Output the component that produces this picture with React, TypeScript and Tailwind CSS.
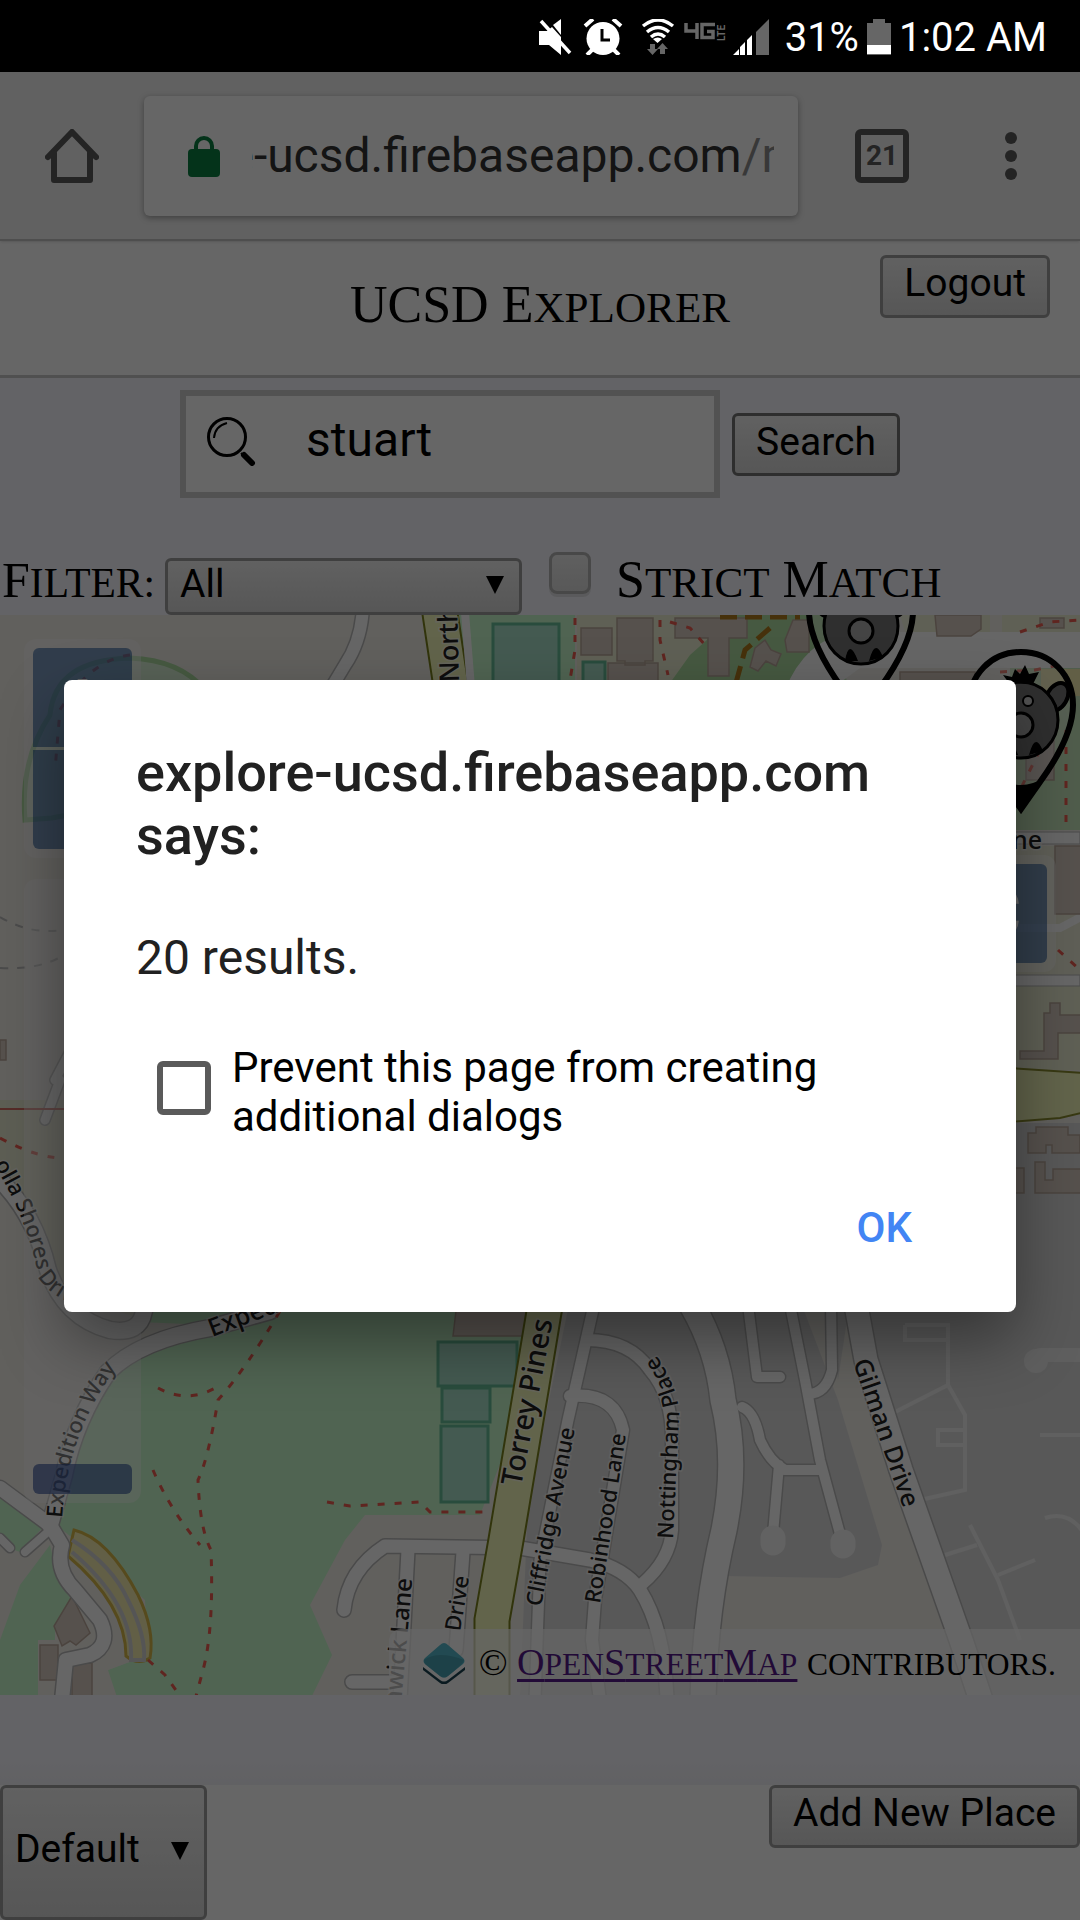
import React from "react";

const serif = "font-['Liberation_Serif',serif]";
const face = "border-[3px] rounded-md bg-linear-to-b from-[#f2f2f2] to-[#d8d8d8] text-[39px] leading-[47px] text-black";

/* Large small-caps: lowercase runs are drawn as slightly reduced capitals. */
function SmallCaps({ children }: { children: string }) {
  return (
    <>
      {children.split(/([a-z.:]+)/).map((run, i) =>
        i % 2 ? <span key={i} className="text-[0.83em] uppercase">{run}</span> : run
      )}
    </>
  );
}

function StatusIcons() {
  return (
    <svg className="h-9 w-[232px] shrink-0" viewBox="538 18 232 36" aria-hidden="true">
      <g fill="#fff">
        <path d="M538 30h8l5-4 9 10v18l-12-10h-10z" />
        <path d="M552 24l8-6v16z" />
        <path d="M540 20l29 32" stroke="#fff" strokeWidth="3.5" />
        <circle cx="602" cy="37.500" r="16.500" />
        <path d="M584 25l8-7M612 18l8 7M591 49l-5 5M613 49l5 5" stroke="#fff" strokeWidth="4" />
      </g>
      <path d="M601 28v11h8" fill="none" stroke="#000" strokeWidth="3" />
      <g fill="none" stroke="#fff" strokeWidth="3.500">
        <path d="M642 25q15-12 30 0" />
        <path d="M646 31q11-9 22 0" />
        <path d="M650 36q7-6 14 0" />
      </g>
      <path d="M652 38q5-3 9 0l-4.500 4z" fill="#fff" />
      <path d="M649 43h5v5h3l-5.500 6-5.500-6h3zM659 53h5v-5h3l-5.500-6-5.500 6h3z" fill="#666" />
      <path d="M685 22v8h11M696 22v16M714 23.500h-13v13h11v-6h-6" fill="none" stroke="#666" strokeWidth="3.500" />
      <text transform="translate(724 40) rotate(-90)" fontSize="10" fontWeight="700" fill="#666" fontFamily="Roboto, sans-serif">LTE</text>
      <path d="M732 54l6-6v6zM739 54v-8l5-5v13zM746 54V39l5-5v20z" fill="#fff" />
      <path d="M755 54V31l13-13v36z" fill="#666" />
    </svg>
  );
}

function Pin({ x, y }: { x: number; y: number }) {
  return (
    <g transform={`translate(${x} ${y})`}>
      <path d="M0-49C-30-49-52-26-52 4c0 22 12 48 33 77L0 108l19-27C40 52 52 26 52 4 52-26 30-49 0-49z" fill="#fff" fillOpacity=".25" stroke="#000" strokeWidth="6" />
      <path d="M-24 76Q0 92 24 76L0 112z" fill="#000" />
      <ellipse cx="-36" cy="-4" rx="10" ry="15" transform="rotate(-30 -36 -4)" fill="#777" stroke="#000" strokeWidth="4" />
      <ellipse cx="36" cy="-4" rx="10" ry="15" transform="rotate(30 36 -4)" fill="#777" stroke="#000" strokeWidth="4" />
      <ellipse cy="19" rx="37" ry="38" fill="#777" stroke="#000" strokeWidth="3" />
      <path d="M-12-18l-6-8 9 2 3-8 5 5 5-9 4 9 10-2-6 12z" fill="#000" />
      <circle cy="24" r="12" fill="#aaa" stroke="#000" strokeWidth="3" />
      <circle cx="7" cy="0" r="5" fill="#ccc" stroke="#000" strokeWidth="2" />
      <path d="M-16 54q4-24 13 0zM8 54q6-24 14-4z" fill="#000" />
    </g>
  );
}

const whiteRoads = [
  { d: "M363 605Q362 640 345 665L330 690", w: 12 },
  { d: "M0 1180Q35 1215 48 1270Q65 1318 110 1330Q140 1335 144 1311", w: 16 },
  { d: "M270 1311L210 1328Q140 1340 108 1372Q75 1420 64 1475L50 1525", w: 16 },
  { d: "M0 1488L50 1525L62 1545Q55 1570 75 1590L100 1620Q112 1645 90 1655L66 1660L62 1700", w: 14 },
  { d: "M50 1530L25 1552M10 1548L0 1538", w: 8 },
  { d: "M344 1610Q348 1570 385 1546L520 1548L590 1560Q625 1568 640 1590Q665 1630 667 1700", w: 13 },
  { d: "M408 1550L400 1700M463 1552L456 1650M352 1682H400", w: 13 },
  { d: "M594 1305L568 1420L540 1560L535 1700", w: 11 },
  { d: "M587 1340Q630 1340 650 1370Q672 1395 672 1440V1530Q670 1560 642 1584", w: 12 },
  { d: "M570 1396Q615 1392 623 1430L595 1600L592 1640L600 1700", w: 12 },
  { d: "M692 1305Q718 1350 723 1400Q738 1460 724 1530Q705 1610 703 1700", w: 25 },
  { d: "M856 1305L866 1360L901 1470L961 1640L981 1700", w: 23 },
  { d: "M748 1305L757 1377H780M790 1305L805 1380L820 1460L843 1545M831 1305L832 1370Q826 1394 808 1394", w: 10 },
  { d: "M742 1407Q755 1412 760 1440Q770 1462 785 1470H820M779 1465L772 1545", w: 10 },
  { d: "M60 1080L45 1120M150 900L55 1080", w: 9 },
];

const gentleLanes =
  "M905 1325H948V1385L965 1415V1490L920 1500M948 1385L895 1412M905 1325V1340H948M963 1430H938V1445H963M970 1525L998 1580L1020 1640M998 1575L1035 1560M945 1555L977 1545M1040 1435H1080M1045 1518Q1070 1510 1085 1535";

const footpaths = [
  "M280 1311Q245 1370 218 1400Q208 1460 198 1480Q200 1530 211 1550Q214 1630 203 1670L195 1700",
  "M158 1388Q190 1405 220 1385M153 1470Q170 1510 200 1545",
  "M327 1502L350 1506L420 1502L430 1512H492",
  "M148 1660L165 1675L183 1700",
  "M575 618V650L570 680M660 620V640L668 675M670 622L690 628L705 645",
  "M1020 632L1050 622L1080 620M1000 672L1035 670L1060 665M1066 730V830M1040 750L1020 790",
  "M0 1138Q40 1160 70 1158M1058 950L1080 970M130 655Q90 660 60 710L55 770",
];

const buildings = [
  "M581 628h31v27h-31zM617 618h36v43h-8v4h-20v-4h-8zM608 663h50v25h-50zM675 618h72v20h-18v38h-21v-38h-33zM755 648l10-8 6 10 10 4-5 12-10-5-8 10-8-4zM785 640l8-20h16v32h-22z",
  "M935 615h46v14l-10 7h-34zM1040 618h24v10h-24zM900 672h75v20h-75zM1026 740h28v40h-28z",
  "M1055 846h35v68h-35zM1050 1003h10v12h22v18h-24v26h-38v-8h24v-38h6zM1028 1133h8v-6h32v8h12v18h-28v-8h-6v8h-18zM1012 1168h12v25h-12zM1035 1162h10v18h8v-11h30v24h-48z",
  "M456 1311h72l-3 25h-72zM72 1596l18 37-14 12-6-4-8 5-8-20zM40 1645h18v35H40zM72 1663h20v40H72zM0 1040h6v20H0z",
];

const labels = [
  { d: "M521 1487L558 1292", t: "Torrey Pines", s: 29 },
  { d: "M853 1362L916 1545", t: "Gilman Drive", s: 25 },
  { d: "M541 1607L580 1402", t: "Cliffridge Avenue", s: 22 },
  { d: "M600 1604L631 1402", t: "Robinhood Lane", s: 22 },
  { d: "M673 1539L679 1415Q678 1375 632 1325", t: "Nottingham Place", s: 22 },
  { d: "M401 1706L414 1560", t: "nwick Lane", s: 24 },
  { d: "M460 1632L472 1560", t: "Drive", s: 22 },
  { d: "M212 1337L310 1300", t: "Expedi", s: 25 },
  { d: "M62 1518Q68 1420 135 1345", t: "Expedition Way", s: 22 },
  { d: "M-6 1164Q30 1225 38 1276Q54 1310 150 1322", t: "olla Shores Drive", s: 22 },
  { d: "M459 682L456 570", t: "North", s: 27 },
];

function CampusMap() {
  return (
    <svg className="block h-full w-full" viewBox="0 615 1080 1080" preserveAspectRatio="xMidYMid slice" role="img" aria-label="Campus map">
      <rect y="600" width="1080" height="1100" fill="#f2efe9" />
      <path d="M0 1100H150V1320Q60 1300 48 1260L0 1180z" fill="#e9ebd2" />
      <path d="M150 1311H560L480 1515H365L345 1540L310 1605L332 1655L310 1700H118L108 1670L148 1655L145 1600L100 1560L50 1520L60 1470L105 1370L210 1325L140 1322z" fill="#c8facc" />
      <path d="M0 1495L45 1525L20 1552L0 1545zM50 1545L58 1580L75 1605L55 1625L55 1640H38V1695H0V1640L20 1585z" fill="#c8facc" />
      <path d="M108 1670L148 1655L140 1620L100 1665z" fill="#f2efe9" />
      <path d="M455 600H480V615H575V700H462z" fill="#c8facc" />
      <path d="M577 615H745L700 690H577z" fill="#eef0d5" />
      <path d="M690 655L735 615H825L850 690H665z" fill="#aedfa3" />
      <path d="M900 615H990V632H905zM1002 615H1080V632H1002z" fill="#eef0d5" />
      <path d="M785 690Q805 640 850 632H1080V668H860L830 690z" fill="#fff" />
      <path d="M1010 668H1080V830H1010z" fill="#c8e8bd" />
      <rect x="1041" y="669" width="40" height="27" fill="#f5eeb0" />
      <rect x="1010" y="846" width="70" height="130" fill="#eeeeda" />
      <rect x="1010" y="985" width="70" height="85" fill="#eef0d5" />
      <path d="M1010 832H1080V844H1010zM1010 975H1080V986H1010z" fill="#fff" stroke="#bbb" />
      <path d="M1005 928H1060L1085 915" fill="none" stroke="#fff" strokeWidth="8" />
      <path d="M1010 1068L1085 1073V1112L1060 1118L1010 1122z" fill="#f6fabb" stroke="#8c9030" strokeWidth="2" />
      <path d="M1010 1123H1080V1700H520L528 1500L570 1300H1010z" fill="#dddddd" />
      <path d="M800 1300H826L838 1380L850 1300L990 1700H712L725 1576L840 1578L878 1565L882 1545L838 1400z" fill="#f2efe9" />
      <path d="M1080 1355H1040" stroke="#eee" strokeWidth="14" strokeLinecap="round" />
      <circle cx="1036" cy="1361" r="12" fill="#eee" />
      <path d={gentleLanes} fill="none" stroke="#f0f0f0" strokeWidth="4" />
      <path d="M25 820Q20 760 50 715Q55 660 130 658Q180 660 205 690V800Q90 810 52 818z" fill="#c8facc" fillOpacity=".5" stroke="#aedfa3" strokeWidth="5" />
      <g fill="#aae0cb" stroke="#66bf98" strokeWidth="3">
        <rect x="493" y="624" width="66" height="70" />
        <rect x="583" y="662" width="22" height="30" />
        <rect x="438" y="1342" width="79" height="44" />
        <rect x="442" y="1388" width="48" height="34" />
        <rect x="441" y="1426" width="47" height="76" />
      </g>
      <path d="M74 1530Q108 1538 138 1595Q155 1630 150 1658Q138 1666 126 1656Q126 1605 68 1556z" fill="#f5eeb0" stroke="#d8b84a" strokeWidth="3" />
      <path d="M72 1540Q112 1565 128 1600Q146 1635 144 1660H131Q134 1605 72 1552" fill="none" stroke="#d5d5d5" strokeWidth="4" />
      <g fill="#d6cac1" stroke="#bba99c" strokeWidth="1.500">
        {buildings.map((d) => <path key={d} d={d} />)}
      </g>
      <g fill="none" strokeLinecap="round" strokeLinejoin="round">
        {whiteRoads.map((r) => <path key={r.d} d={r.d} stroke="#b9b9b9" strokeWidth={r.w + 3} />)}
        {whiteRoads.map((r) => <path key={r.d} d={r.d} stroke="#fff" strokeWidth={r.w} />)}
        <path d="M773 1538V1543M843 1542V1546" stroke="#f5f5f5" strokeWidth="25" />
      </g>
      <g fill="none">
        <path d="M546 1300L506 1540L492 1620V1700M438 600L453 700" stroke="#7c831e" strokeWidth="37" />
        <path d="M546 1300L506 1540L492 1620V1700M438 600L453 700" stroke="#f6fabb" strokeWidth="33" />
        <path d="M464 600L472 700" stroke="#fff" strokeWidth="8" />
        <path d="M0 1109H66" stroke="#d46b62" strokeWidth="2" />
        <path d="M0 917Q30 935 64 930M0 968Q40 970 64 955" stroke="#bbb" strokeWidth="2" strokeDasharray="8 9" />
        <path d="M770 628L745 650L734 690M720 617H800" stroke="#b07b1c" strokeWidth="5" strokeDasharray="17 8" />
        {footpaths.map((d) => <path key={d} d={d} stroke="#ee5c50" strokeWidth="3" strokeDasharray="7 10" />)}
      </g>
      <g fontFamily="Noto Sans, sans-serif" fontWeight="500" fill="#222" stroke="#fff" strokeOpacity=".6" strokeWidth="3" paintOrder="stroke">
        {labels.map((l, i) => (
          <React.Fragment key={l.t}>
            <path id={`street-${i}`} d={l.d} fill="none" stroke="none" />
            <text fontSize={l.s}><textPath href={`#street-${i}`}>{l.t}</textPath></text>
          </React.Fragment>
        ))}
        <text x="1012" y="849" fontSize="25">ne</text>
      </g>
      <Pin x={861} y={607} />
      <Pin x={1021} y={701} />
    </svg>
  );
}

function Arrow({ className }: { className: string }) {
  return (
    <svg className={`pointer-events-none absolute h-[18px] w-[18px] ${className}`} viewBox="0 0 18 18" aria-hidden="true">
      <path d="M0 0h18L9 18z" />
    </svg>
  );
}

export default function App() {
  return (
    <div className="relative flex min-h-screen flex-col overflow-hidden bg-white font-[Roboto,sans-serif] text-black">
      <div className="relative z-20 flex h-[72px] items-center justify-end bg-black pt-0.5 pr-[33px] text-[40px] leading-[47px] text-white">
        <StatusIcons />
        <span className="ml-3.5">31%</span>
        <svg className="mx-2 h-9 w-6" viewBox="0 0 24 36" aria-hidden="true">
          <path d="M0 4h6V0h12v4h6v32H0z" fill="#666" />
          <path d="M0 26h24v9H0z" fill="#fff" />
        </svg>
        <span>1:02 AM</span>
      </div>

      <div className="flex h-[169px] items-center border-b-2 border-[#c4c4c4] bg-[#f2f2f2] shadow-sm">
        <button aria-label="Home" className="flex w-36 shrink-0 justify-center">
          <svg className="h-[54px] w-[54px]" viewBox="0 0 54 54" fill="none" stroke="#5a5a5a" strokeWidth="6" strokeLinecap="round" strokeLinejoin="round">
            <path d="M3 28L27 3l24 25" />
            <path d="M9 24v27h36V24" />
          </svg>
        </button>
        <div className="flex h-[120px] min-w-0 flex-1 items-center rounded-md bg-white pr-6 pl-11 shadow-[0_2px_6px_rgba(0,0,0,0.35)]">
          <svg className="h-[42px] w-8 shrink-0" viewBox="0 0 32 42" aria-label="Secure">
            <path d="M8 16v-5a8 8 0 0 1 16 0v5" fill="none" stroke="#0b8043" strokeWidth="4" />
            <rect y="14" width="32" height="28" rx="4" fill="#0b8043" />
          </svg>
          <div className="ml-8 flex min-w-0 flex-1 justify-center overflow-hidden text-5xl leading-[60px] whitespace-nowrap text-[#333]">
            <span className="pl-1.5">e-ucsd.firebaseapp.com<span className="text-[#8c8c8c]">/m</span></span>
          </div>
        </div>
        <button className="mx-[57px] flex h-[54px] w-[54px] shrink-0 items-center justify-center rounded-md border-[6px] border-[#5a5a5a] text-[28px] leading-none font-bold text-[#5a5a5a]">21</button>
        <button aria-label="Menu" className="mr-[63px] ml-[39px] flex shrink-0 flex-col gap-1.5">
          <span className="size-3 rounded-full bg-[#5a5a5a]" />
          <span className="size-3 rounded-full bg-[#5a5a5a]" />
          <span className="size-3 rounded-full bg-[#5a5a5a]" />
        </button>
      </div>

      <header className="grid h-[137px] grid-cols-[1fr_auto_1fr] items-start border-b-[3px] border-[#c8c8c8]">
        <h1 className={`col-start-2 mt-[34px] text-[52px] leading-[60px] ${serif}`}><SmallCaps>UCSD Explorer</SmallCaps></h1>
        <button className={`mt-3.5 mr-[30px] h-[63px] justify-self-end border-[#9e9e9e] px-[21px] pb-1.5 ${face}`}>Logout</button>
      </header>

      <main className="bg-[#f8f8ff]">
        <form className="flex items-center justify-center gap-3 pt-3" onSubmit={(e) => e.preventDefault()}>
          <label className="flex h-[108px] w-1/2 items-center border-[6px] border-[#ccc] bg-white pl-[21px]">
            <svg className="mb-1.5 h-[50px] w-[50px] shrink-0" viewBox="0 0 50 50" aria-hidden="true">
              <circle cx="20" cy="21" r="18.500" fill="none" stroke="#000" strokeWidth="3" />
              <path d="M7 22Q8 10 20 7M34 37l3 3" fill="none" stroke="#000" strokeWidth="2" />
              <path d="M37 39l8 8" stroke="#000" strokeWidth="6" strokeLinecap="round" />
            </svg>
            <input aria-label="Search places" defaultValue="stuart" className="ml-[49px] w-full min-w-0 bg-transparent pb-2 text-5xl leading-[56px] outline-none" />
          </label>
          <button className={`h-[63px] border-[#737373] px-[21px] pb-1 ${face}`}>Search</button>
        </form>
        <div className="flex h-[117px] items-end">
          <label htmlFor="filter" className={`w-[165px] pb-1 pl-0.5 text-[50px] leading-[56px] ${serif}`}><SmallCaps>Filter:</SmallCaps></label>
          <div className="relative w-[357px]">
            <select id="filter" className={`block h-[57px] w-full appearance-none border-[#9e9e9e] pb-1.5 pl-3 ${face}`}>
              <option>All</option>
            </select>
            <Arrow className="top-[18px] right-[18px]" />
          </div>
          <label className={`flex items-end gap-[25px] pl-[27px] text-[52px] leading-[56px] ${serif}`}>
            <input type="checkbox" className="mb-[21px] size-[42px] appearance-none rounded-lg border-[3px] border-[#b4b4b4] bg-linear-to-b from-[#eee] to-[#ddd] shadow-[0_3px_0_#e2e2e6]" />
            <span className="pb-1"><SmallCaps>Strict Match</SmallCaps></span>
          </label>
        </div>

        <section className="relative h-[1080px] overflow-hidden">
          <CampusMap />
          <div className="absolute top-6 left-6 flex w-[117px] flex-col gap-[3px] rounded-xl bg-white/40 p-[9px] text-7xl font-bold text-white">
            <button aria-label="Zoom in" className="h-[99px] rounded-t-md bg-[#003c88]/50">+</button>
            <button aria-label="Zoom out" className="h-[99px] rounded-b-md bg-[#003c88]/50">−</button>
          </div>
          <div className="absolute top-[264px] left-6 flex h-[624px] w-[117px] items-end rounded-xl bg-white/40 p-[9px]">
            <button aria-label="Zoom level" className="h-[30px] w-full rounded-md bg-[#234493]/60" />
          </div>
          <div className="absolute top-[240px] right-6 w-[117px] rounded-xl bg-white/40 p-[9px]">
            <button aria-label="Center map" className="h-[99px] w-full rounded-md bg-[#003c88]/50 text-7xl font-bold text-white">C</button>
          </div>
          <div className={`absolute right-0 bottom-0 flex h-[66px] items-center rounded-tl-xl bg-white/70 pt-0.5 pr-6 pl-[34px] text-[38px] leading-[48px] ${serif}`}>
            <svg className="mr-3.5 h-[42px] w-[42px]" viewBox="0 0 42 42" aria-hidden="true">
              <path d="M0 24v4l17 13q4 3 8 0l17-13v-4z" fill="#1b4352" />
              <path d="M0 21v4l17 13q4 3 8 0l17-13v-4z" fill="#fff" />
              <path d="M2 16L17 3q4-4 8 0l15 13q3 3 0 6L25 34q-4 3-8 0L2 22q-3-3 0-6z" fill="#55b9cc" />
              <path d="M1 18Q15 8 41 18 41 21 25 34q-4 3-8 0L2 22q-1-2-1-4z" fill="#469aab" fillOpacity=".7" />
            </svg>
            <p>© <a href="#osm" className="text-[#551a8b] underline decoration-[3px] underline-offset-4"><SmallCaps>OpenStreetMap</SmallCaps></a> <SmallCaps>contributors.</SmallCaps></p>
          </div>
        </section>
        <div className="h-[90px] bg-linear-to-b from-[#f8f8ff] from-70% to-[#f2f2f8]" />
      </main>

      <footer className="flex flex-1 items-start justify-between">
        <div className="relative w-[207px]">
          <select aria-label="Map style" className={`block h-[135px] w-full appearance-none border-[#9e9e9e] pb-1.5 pl-3 ${face}`}>
            <option>Default</option>
          </select>
          <Arrow className="top-[57px] right-[18px]" />
        </div>
        <button className={`h-[63px] border-[#9e9e9e] px-[21px] pb-1.5 ${face}`}>Add New Place</button>
      </footer>

      <div className="absolute inset-0 z-10 flex items-center justify-center bg-black/60 px-16 pt-[72px]">
        <div role="alertdialog" aria-labelledby="dialog-title" className="flex w-full max-w-[952px] flex-col rounded-lg bg-white px-[72px] pt-[61px] pb-[60px] text-[#212121] shadow-[0_28px_64px_rgba(0,0,0,0.4)]">
          <h2 id="dialog-title" className="text-[54px] leading-[63px] font-medium break-words">explore-ucsd.firebaseapp.com says:</h2>
          <p className="mt-[63px] text-5xl leading-[56px]">20 results.</p>
          <label className="mt-[49px] flex items-center gap-[21px] pl-[21px] text-[42px] leading-[49px] text-black">
            <input type="checkbox" className="size-[54px] shrink-0 appearance-none rounded-md border-[6px] border-[#5a5a5a]" />
            <span className="pt-2">Prevent this page from creating additional dialogs</span>
          </label>
          <button className="mt-[62px] mr-8 self-end text-[42px] leading-[49px] font-medium text-[#4285f4]">OK</button>
        </div>
      </div>
    </div>
  );
}
